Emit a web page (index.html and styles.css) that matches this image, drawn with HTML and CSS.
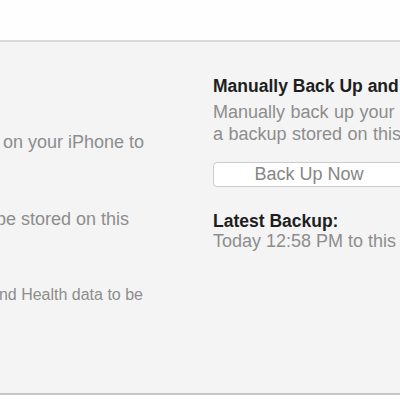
FILE: index.html
```html
<!DOCTYPE html>
<html>
<head>
<meta charset="utf-8">
<link rel="stylesheet" href="styles.css">
</head>
<body>
<div class="topbar"></div>
<div class="panel">
  <div class="left">
    <div class="desc d1"><span>Back up the most important data on your iPhone to</span></div>
    <div class="desc d2"><span>A full backup of your iPhone will be stored on this</span></div>
    <div class="desc d3"><span>This will allow account passwords, and Health data to be</span></div>
  </div>
  <div class="right">
    <div class="title">Manually Back Up and Restore</div>
    <div class="text">
      <div>Manually back up your iPhone to this computer or restore</div>
      <div>a backup stored on this computer.</div>
    </div>
    <div class="button">Back Up Now</div>
    <div class="latest">
      <div class="label">Latest Backup:</div>
      <div class="value">Today 12:58 PM to this computer</div>
    </div>
  </div>
</div>
</body>
</html>
```
FILE: styles.css
```css
html, body {
  margin: 0;
  padding: 0;
  background: #ffffff;
  overflow: hidden;
  width: 400px;
  height: 400px;
}
body {
  font-family: "Liberation Sans", Arial, sans-serif;
}
.topbar {
  height: 40px;
  background: #fefefe;
  border-bottom: 2px solid #dadada;
}
.panel {
  height: 351px;
  background: #f4f4f4;
  border-bottom: 2px solid #c6c6c6;
  display: flex;
  overflow: hidden;
}
.left {
  width: 213px;
  flex: none;
  overflow: hidden;
  padding-top: 89px;
  box-sizing: border-box;
}
.desc {
  display: flex;
  justify-content: flex-end;
  font-size: 18px;
  line-height: 22px;
  color: #8d8d8d;
  white-space: nowrap;
}
.desc span {
  flex: none;
}
.d1 { padding-right: 69px; }
.d2 { margin-top: 55px; padding-right: 84px; }
.d3 { margin-top: 54px; padding-right: 70px; font-size: 16px; }
.right {
  flex: none;
  width: 300px;
  padding-top: 33px;
  white-space: nowrap;
}
.title {
  font-weight: bold;
  font-size: 17.5px;
  line-height: 22px;
  color: #1e1e1e;
}
.text {
  margin-top: 4px;
  font-size: 18px;
  line-height: 22px;
  color: #8d8d8d;
  word-spacing: 0.5px;
}
.button {
  margin-top: 17px;
  width: 190px;
  height: 23px;
  line-height: 23px;
  border: 1px solid #cbcbcb;
  border-radius: 4px;
  background: #ffffff;
  text-align: center;
  font-size: 18px;
  color: #868686;
}
.latest {
  margin-top: 24px;
  line-height: 20px;
}
.label {
  font-weight: bold;
  font-size: 17.5px;
  color: #1e1e1e;
}
.value {
  font-size: 18px;
  color: #8d8d8d;
}
```
